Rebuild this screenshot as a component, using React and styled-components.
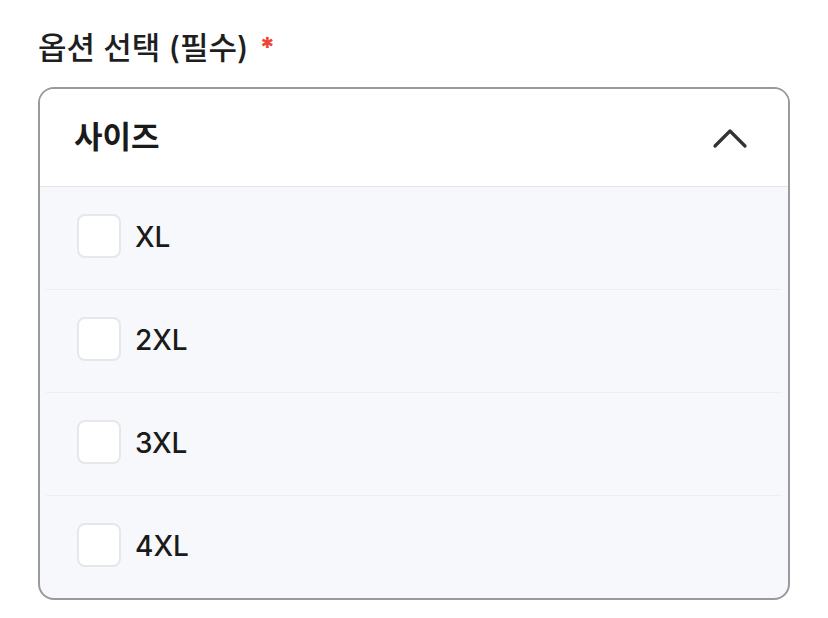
import React from "react";
import styled, { createGlobalStyle } from "styled-components";

const Global = createGlobalStyle`
  html, body { margin: 0; padding: 0; background: #ffffff; }
  body { font-family: Inter, "Noto Sans CJK KR", sans-serif; }
`;

const Page = styled.div`
  padding: 22px 38px 0 38px;
  width: 752px;
`;

const Label = styled.div`
  display: flex;
  align-items: center;
  gap: 11px;
  height: 46px;
  font-size: 31px;
  font-weight: 500;
  color: #1f1f1f;
`;

const Star = styled.span`
  color: #f04438;
  font-size: 27px;
  font-weight: 800;
  line-height: 1;
  margin-top: 4px;
`;

const Box = styled.div`
  margin-top: 19px;
  border: 2px solid #9a9a9a;
  border-radius: 16px;
  overflow: hidden;
  background: #f7f8fb;
`;

const Header = styled.div`
  display: flex;
  align-items: center;
  justify-content: space-between;
  height: 97px;
  padding: 0 40px 0 34px;
  background: #ffffff;
  border-bottom: 1.5px solid #e3e5ea;
`;

const Title = styled.div`
  font-size: 31px;
  font-weight: 700;
  color: #1a1a1a;
  margin-top: -6px;
`;

const List = styled.div`
  display: flex;
  flex-direction: column;
  padding: 0 6px;
`;

const Row = styled.label`
  display: flex;
  align-items: center;
  gap: 14px;
  height: 102px;
  padding-left: 31px;
  border-bottom: ${(p) => (p.$last ? "none" : "1px solid #eceef2")};
  font-size: 28px;
  font-weight: 500;
  color: #1a1a1a;
`;

const Check = styled.span`
  width: 40px;
  height: 40px;
  border: 2.5px solid #e6e7ea;
  border-radius: 8px;
  background: #ffffff;
  margin-top: -4px;
`;

const Text = styled.span`
  margin-top: -2px;
`;

const Chevron = () => (
  <svg width="36" height="22" viewBox="0 0 36 22" fill="none">
    <path d="M3 19 L18 4 L33 19" stroke="#333" strokeWidth="3.2" strokeLinecap="round" strokeLinejoin="round" />
  </svg>
);

const options = ["XL", "2XL", "3XL", "4XL"];

export default function App() {
  return (
    <>
      <Global />
      <Page>
        <Label>
          옵션 선택 (필수)<Star>*</Star>
        </Label>
        <Box>
          <Header>
            <Title>사이즈</Title>
            <Chevron />
          </Header>
          <List>
            {options.map((o, i) => (
              <Row key={o} $last={i === options.length - 1}>
                <Check />
                <Text>{o}</Text>
              </Row>
            ))}
          </List>
        </Box>
      </Page>
    </>
  );
}
